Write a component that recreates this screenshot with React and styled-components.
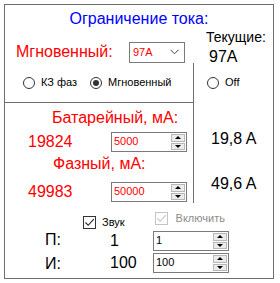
import React from 'react';
import styled, { createGlobalStyle } from 'styled-components';

const GlobalStyle = createGlobalStyle`
  html, body {
    margin: 0;
    padding: 0;
    background: #fff;
  }
  body {
    font-family: "Liberation Sans", Arial, sans-serif;
  }
`;

const LINE = '#6e6e6e';
const RED = '#ff0000';

const Frame = styled.div`
  box-sizing: border-box;
  margin: 4px 0 0 4px;
  width: 270px;
  height: 275px;
  border: 1px solid ${LINE};
  display: grid;
  grid-template-columns: 189px 1fr;
  grid-template-rows: 23px 35px 39px 101px 1fr;
`;

const Title = styled.div`
  grid-column: 1 / -1;
  padding-top: 5px;
  font-size: 16px;
  line-height: 18px;
  color: #0000ff;
  text-align: center;
`;

const ModeCell = styled.div`
  display: flex;
  align-items: flex-end;
  justify-content: space-between;
  padding: 0 9px 0 11px;
`;

const BigText = styled.span`
  font-size: 16px;
  line-height: 18px;
  color: ${p => p.$color || '#000'};
  white-space: nowrap;
`;

const ModeLabel = styled(BigText)`
  margin-bottom: 2px;
`;

const Dropdown = styled.div`
  box-sizing: border-box;
  width: 56px;
  height: 21px;
  border: 1px solid #7a7a7a;
  background: #fff;
  display: flex;
  align-items: center;
  justify-content: space-between;
  padding: 0 5px 2px 3px;
  font-size: 11px;
  color: ${RED};
`;

const CurrentCell = styled.div`
  display: flex;
  flex-direction: column;
  padding: 1px 0 0 12px;
`;

const CurrentCaption = styled.span`
  font-size: 14px;
  line-height: 16px;
`;

const CurrentValue = styled(BigText)`
  margin: 3px 0 0 3px;
`;

const RadioPanel = styled.div`
  border-right: 1px solid ${LINE};
  display: flex;
  align-items: center;
  gap: 13px;
  padding-left: 18px;
`;

const OffCell = styled.div`
  display: flex;
  align-items: center;
  padding-left: 13px;
`;

const RadioItem = styled.label`
  display: flex;
  align-items: center;
  gap: 6px;
  font-size: 11px;
  line-height: 13px;
  color: #000;
`;

const RadioCircle = styled.span`
  box-sizing: border-box;
  width: 12px;
  height: 12px;
  border: 1px solid #333;
  border-radius: 50%;
  background: #fff;
  display: flex;
  align-items: center;
  justify-content: center;

  &::after {
    content: '';
    width: 6px;
    height: 6px;
    border-radius: 50%;
    background: ${p => (p.$checked ? '#333' : 'transparent')};
  }
`;

const SettingsPanel = styled.div`
  border-top: 1px solid ${LINE};
  border-right: 1px solid ${LINE};
  display: flex;
  flex-direction: column;
  padding-top: 6px;
`;

const SectionLabel = styled(BigText)`
  margin-top: ${p => p.$top || 0}px;
  padding-left: ${p => p.$left}px;
`;

const ValueRow = styled.div`
  display: flex;
  align-items: center;
  height: 20px;
  margin-top: ${p => p.$top}px;
  padding-left: 23px;
`;

const MeasuredValue = styled.span`
  width: 83px;
  font-size: 16px;
  line-height: 20px;
  color: ${RED};
`;

const AmpsCell = styled.div`
  display: flex;
  flex-direction: column;
  padding-left: 17px;
`;

const Amps = styled(BigText)`
  margin-top: ${p => p.$top}px;
`;

const Bottom = styled.div`
  grid-column: 1 / -1;
  display: flex;
  flex-direction: column;
  padding-top: 9px;
`;

const CheckRow = styled.div`
  display: flex;
  align-items: flex-start;
  height: 19px;
  padding-left: 78px;
  gap: 30px;
`;

const CheckItem = styled.label`
  display: flex;
  align-items: center;
  gap: ${p => (p.$disabled ? 8 : 6)}px;
  margin-top: ${p => p.$top || 0}px;
  font-size: 11px;
  line-height: 13px;
  color: ${p => (p.$disabled ? '#8c8c8c' : '#000')};
`;

const CheckBox = styled.span`
  box-sizing: border-box;
  width: 13px;
  height: 13px;
  border: 1px solid ${p => (p.$disabled ? '#c4c4c4' : '#333')};
  background: #fff;
  display: flex;
  align-items: center;
  justify-content: center;
`;

const ParamGrid = styled.div`
  display: grid;
  grid-template-columns: 65px 43px 76px;
  grid-auto-rows: 20px;
  row-gap: 2px;
  padding-left: 40px;
`;

const ParamLabel = styled(BigText)`
  align-self: start;
  margin-top: ${p => p.$top || 0}px;
`;

const ParamValue = styled.span`
  font-size: 16px;
  line-height: 20px;
`;

const SpinBox = styled.div`
  box-sizing: border-box;
  width: ${p => p.$width}px;
  height: 20px;
  border: 1px solid #7a7a7a;
  background: #fff;
  display: flex;
  align-items: stretch;
`;

const SpinText = styled.span`
  flex: 1;
  padding-left: 2px;
  font-size: 11px;
  line-height: 16px;
  color: ${p => p.$color};
`;

const SpinButtons = styled.div`
  width: 14px;
  margin: 1px;
  display: flex;
  flex-direction: column;
  gap: 1px;
`;

const SpinButton = styled.span`
  flex: 1;
  box-sizing: border-box;
  border: 1px solid #b8b8b8;
  background: #ececec;
  display: flex;
  align-items: center;
  justify-content: center;

  &::after {
    content: '';
    border-left: 3px solid transparent;
    border-right: 3px solid transparent;
    ${p => (p.$down ? 'border-top: 3px solid #000;' : 'border-bottom: 3px solid #000;')}
  }
`;

const Spinner = ({ value, color = '#000', width = 76 }) => (
  <SpinBox $width={width}>
    <SpinText $color={color}>{value}</SpinText>
    <SpinButtons>
      <SpinButton />
      <SpinButton $down />
    </SpinButtons>
  </SpinBox>
);

const Radio = ({ checked, children }) => (
  <RadioItem>
    <RadioCircle $checked={checked} />
    {children}
  </RadioItem>
);

const Check = ({ disabled, top, children }) => (
  <CheckItem $disabled={disabled} $top={top}>
    <CheckBox $disabled={disabled}>
      <svg width="11" height="11" viewBox="0 0 11 11">
        <polyline
          points="1.5,5.5 4.2,8.3 9.8,2.2"
          fill="none"
          stroke={disabled ? '#c4c4c4' : '#222'}
          strokeWidth="1.1"
        />
      </svg>
    </CheckBox>
    {children}
  </CheckItem>
);

const App = () => {
  return (
    <>
      <GlobalStyle />
      <Frame>
        <Title>Ограничение тока:</Title>

        <ModeCell>
          <ModeLabel $color={RED}>Мгновенный:</ModeLabel>
          <Dropdown>
            <span>97A</span>
            <svg width="9" height="6" viewBox="0 0 9 6">
              <polyline points="0.5,0.8 4.5,4.8 8.5,0.8" fill="none" stroke="#444" strokeWidth="1" />
            </svg>
          </Dropdown>
        </ModeCell>
        <CurrentCell>
          <CurrentCaption>Текущие:</CurrentCaption>
          <CurrentValue>97A</CurrentValue>
        </CurrentCell>

        <RadioPanel>
          <Radio>КЗ фаз</Radio>
          <Radio checked>Мгновенный</Radio>
        </RadioPanel>
        <OffCell>
          <Radio>Off</Radio>
        </OffCell>

        <SettingsPanel>
          <SectionLabel $color={RED} $left={47}>Батарейный, мА:</SectionLabel>
          <ValueRow $top={5}>
            <MeasuredValue>19824</MeasuredValue>
            <Spinner value="5000" color={RED} />
          </ValueRow>
          <SectionLabel $color={RED} $left={48} $top={3}>Фазный, мА:</SectionLabel>
          <ValueRow $top={9}>
            <MeasuredValue>49983</MeasuredValue>
            <Spinner value="50000" color={RED} />
          </ValueRow>
        </SettingsPanel>
        <AmpsCell>
          <Amps $top={28}>19,8 A</Amps>
          <Amps $top={27}>49,6 A</Amps>
        </AmpsCell>

        <Bottom>
          <CheckRow>
            <Check top={4}>Звук</Check>
            <Check disabled>Включить</Check>
          </CheckRow>
          <ParamGrid>
            <ParamLabel>П:</ParamLabel>
            <ParamValue>1</ParamValue>
            <Spinner value="1" />
            <ParamLabel $top={2}>И:</ParamLabel>
            <ParamValue>100</ParamValue>
            <Spinner value="100" />
          </ParamGrid>
        </Bottom>
      </Frame>
    </>
  );
};

export default App;
